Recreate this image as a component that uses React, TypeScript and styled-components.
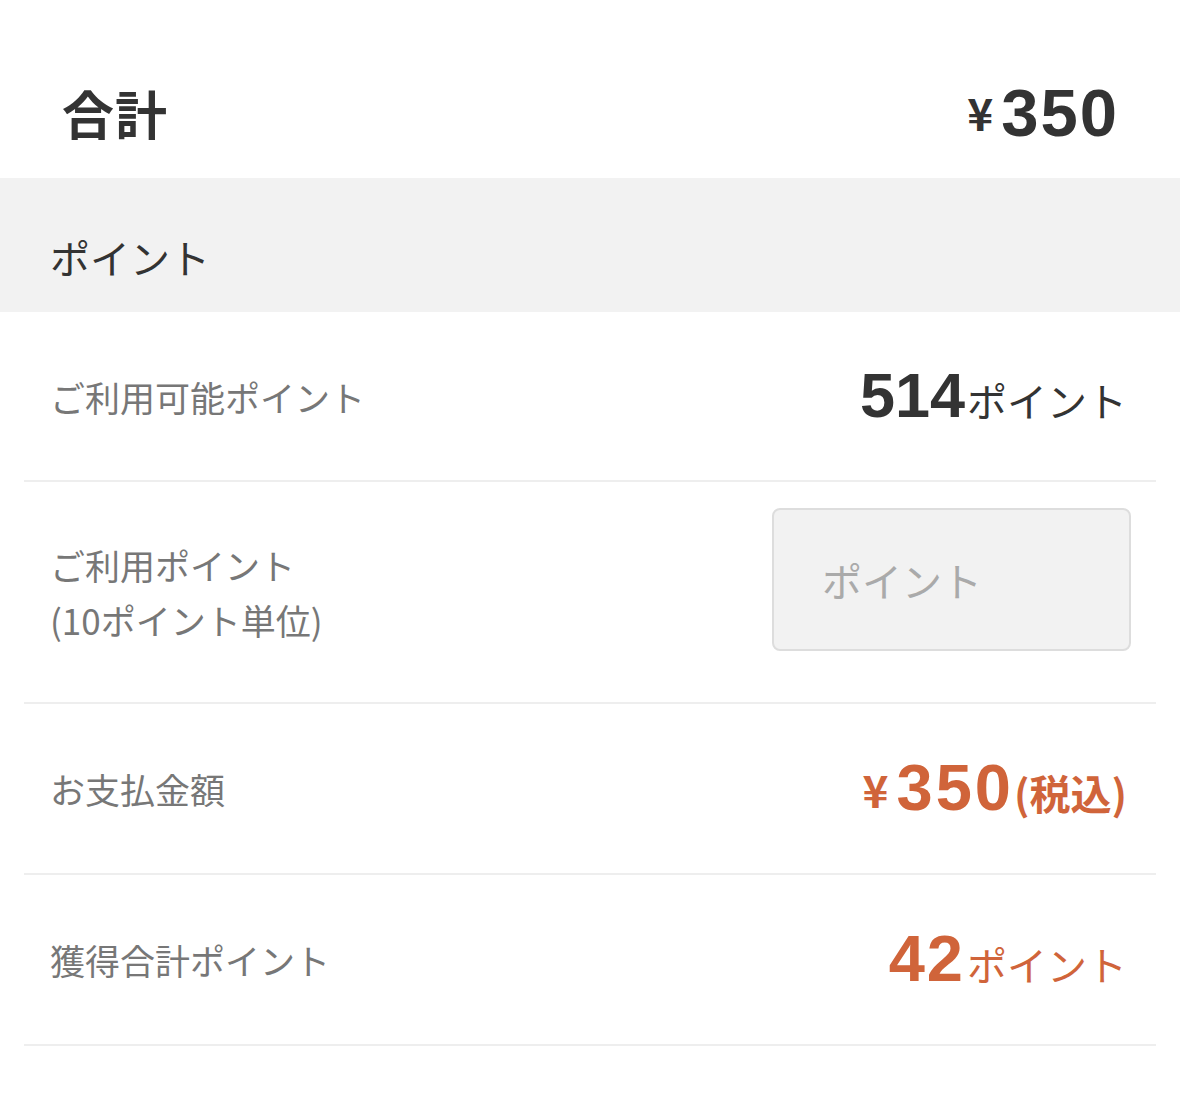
import React from 'react';
import styled, { createGlobalStyle } from 'styled-components';

const GlobalStyle = createGlobalStyle`
  body {
    margin: 0;
    background: #ffffff;
    font-family: "Noto Sans CJK JP", "Noto Sans", sans-serif;
  }
`;

const Page = styled.div`
  width: 1180px;
  background: #ffffff;
`;

const TotalBar = styled.div`
  height: 178px;
  box-sizing: border-box;
  padding: 46px 61px 0 62px;
  display: flex;
  align-items: center;
  justify-content: space-between;
  color: #333333;
`;

const TotalLabel = styled.div`
  font-size: 52px;
  font-weight: 700;
  letter-spacing: 1px;
`;

const Amount = styled.div<{ accent?: boolean }>`
  display: flex;
  align-items: baseline;
  color: ${p => (p.accent ? '#d0643a' : '#333333')};
`;

const Yen = styled.span<{ size: number }>`
  align-self: center;
  font-family: "Noto Sans CJK JP", sans-serif;
  font-size: ${p => p.size}px;
  font-weight: 700;
  line-height: 1;
  margin-right: 8px;
`;

const Digits = styled.span<{ size: number; spacing?: number }>`
  font-family: "Liberation Sans", Arial, sans-serif;
  font-size: ${p => p.size}px;
  font-weight: 700;
  line-height: 1;
  letter-spacing: ${p => p.spacing ?? 0}px;
`;

const Suffix = styled.span<{ bold?: boolean }>`
  font-size: ${p => (p.bold ? 41 : 40)}px;
  font-weight: ${p => (p.bold ? 700 : 400)};
  margin-left: ${p => (p.bold ? 0 : 2)}px;
`;

const SectionHeader = styled.div`
  height: 134px;
  box-sizing: border-box;
  padding: 24px 0 0 50px;
  display: flex;
  align-items: center;
  background: #f2f2f2;
  color: #333333;
  font-size: 40px;
`;

const Row = styled.div<{ height: number }>`
  margin: 0 24px;
  height: ${p => p.height}px;
  box-sizing: border-box;
  padding: 0 29px 0 26px;
  display: flex;
  align-items: center;
  justify-content: space-between;
  border-bottom: 2px solid #eeeeee;
`;

const Label = styled.div`
  color: #777777;
  font-size: 35px;
  line-height: 55px;
`;

const PointInput = styled.input`
  align-self: flex-start;
  margin: 26px -4px 0 0;
  width: 359px;
  height: 143px;
  box-sizing: border-box;
  padding: 0 0 0 48px;
  border: 2px solid #dddddd;
  border-radius: 8px;
  background: #f2f2f2;
  font-family: "Noto Sans CJK JP", sans-serif;
  font-size: 40px;
  color: #333333;
  outline: none;

  &::placeholder {
    color: #aaaaaa;
  }
`;

export default function App() {
  return (
    <Page>
      <GlobalStyle />
      <TotalBar>
        <TotalLabel>合計</TotalLabel>
        <Amount>
          <Yen size={44}>¥</Yen>
          <Digits size={67} spacing={2}>350</Digits>
        </Amount>
      </TotalBar>

      <SectionHeader>ポイント</SectionHeader>

      <Row height={170}>
        <Label>ご利用可能ポイント</Label>
        <Amount>
          <Digits size={63}>514</Digits>
          <Suffix>ポイント</Suffix>
        </Amount>
      </Row>

      <Row height={222}>
        <Label>
          ご利用ポイント
          <br />
          (10ポイント単位)
        </Label>
        <PointInput placeholder="ポイント" />
      </Row>

      <Row height={171}>
        <Label>お支払金額</Label>
        <Amount accent>
          <Yen size={44}>¥</Yen>
          <Digits size={65} spacing={3}>350</Digits>
          <Suffix bold>(税込)</Suffix>
        </Amount>
      </Row>

      <Row height={171}>
        <Label>獲得合計ポイント</Label>
        <Amount accent>
          <Digits size={65} spacing={2}>42</Digits>
          <Suffix>ポイント</Suffix>
        </Amount>
      </Row>
    </Page>
  );
}
